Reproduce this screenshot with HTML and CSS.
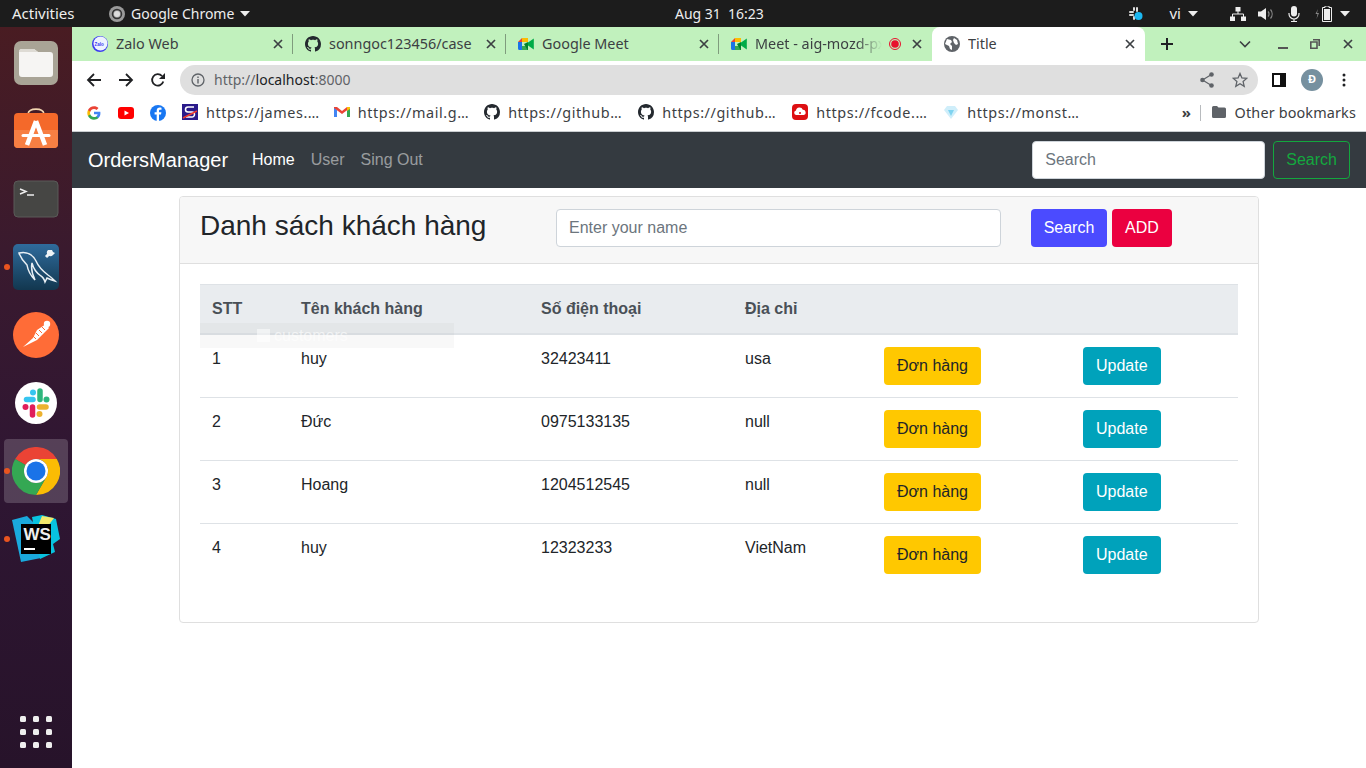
FILE: index.html
```html
<!DOCTYPE html>
<html lang="en">
<head>
    <meta charset="UTF-8">
    <title>Title</title>
    <link rel="stylesheet" href="styles.css">
</head>
<body>
    <!-- Shared icons -->
    <svg class="icon-defs" width="0" height="0">
        <symbol id="github" viewBox="0 0 16 16">
            <path fill="#24292f" d="M8 0C3.58 0 0 3.58 0 8c0 3.54 2.29 6.53 5.47 7.59.4.07.55-.17.55-.38 0-.19-.01-.82-.01-1.49-2.01.37-2.53-.49-2.69-.94-.09-.23-.48-.94-.82-1.13-.28-.15-.68-.52-.01-.53.63-.01 1.08.58 1.23.82.72 1.21 1.87.87 2.33.66.07-.52.28-.87.51-1.07-1.78-.2-3.64-.89-3.64-3.95 0-.87.31-1.59.82-2.15-.08-.2-.36-1.02.08-2.12 0 0 .67-.21 2.2.82.64-.18 1.32-.27 2-.27.68 0 1.36.09 2 .27 1.53-1.04 2.2-.82 2.2-.82.44 1.1.16 1.92.08 2.12.51.56.82 1.27.82 2.15 0 3.07-1.87 3.75-3.65 3.95.29.25.54.73.54 1.48 0 1.07-.01 1.93-.01 2.2 0 .21.15.46.55.38A8.013 8.013 0 0016 8c0-4.42-3.58-8-8-8z"/>
        </symbol>
        <symbol id="meet" viewBox="0 0 16 16">
            <path fill="#fbbc04" d="M4 2h6v4H4z"/>
            <path fill="#ea4335" d="M4 2v4H0z"/>
            <path fill="#1a73e8" d="M0 6h4v8H1.5A1.5 1.5 0 0 1 0 12.5z"/>
            <path fill="#34a853" d="M4 10h6v4H4z"/>
            <path fill="#00832d" d="M10 6v8h-.5L6 8z"/>
            <path fill="#00ac47" d="M10 6.5 15.8 2.5V13.5L10 9.5z"/>
        </symbol>
        <symbol id="close" viewBox="0 0 10 10">
            <path d="M1 1l8 8M9 1l-8 8" stroke="#3c4043" stroke-width="1.7" fill="none"/>
        </symbol>
        <symbol id="caret" viewBox="0 0 10 6">
            <path d="M0 0h10L5 5.5z" fill="#eee"/>
        </symbol>
    </svg>

    <!-- GNOME top bar -->
    <div class="top-bar">
        <div class="top-left">
            <span class="activities">Activities</span>
            <span class="app-menu">
                <svg width="16" height="16" viewBox="0 0 16 16"><circle cx="8" cy="8" r="8" fill="#9a9a9a"/><circle cx="8" cy="8" r="4.5" fill="none" stroke="#333" stroke-width="1.5"/><circle cx="8" cy="8" r="3" fill="#ddd"/></svg>
                <span>Google Chrome</span>
                <svg class="caret" width="10" height="6"><use href="#caret"/></svg>
            </span>
        </div>
        <div class="clock"><span>Aug 31</span><span>16:23</span></div>
        <div class="tray">
            <svg class="tray-slack" width="16" height="16" viewBox="0 0 16 16"><g fill="#ddd"><rect x="1" y="5" width="5" height="2" rx="1"/><rect x="5" y="1" width="2" height="4" rx="1"/><rect x="8" y="1" width="2" height="5" rx="1"/><rect x="1" y="8" width="5" height="2" rx="1"/><rect x="5" y="10" width="2" height="4" rx="1"/></g><circle cx="10.5" cy="10" r="4" fill="#1cb8f2"/></svg>
            <span class="tray-lang">vi</span>
            <svg class="caret tray-lang-caret" width="10" height="6"><use href="#caret"/></svg>
            <svg class="tray-network" width="16" height="14" viewBox="0 0 16 14"><g fill="#eee"><rect x="5.5" y="0" width="5" height="4.5"/><rect x="0" y="9.5" width="5" height="4.5"/><rect x="11" y="9.5" width="5" height="4.5"/></g><path d="M8 4v3M2.5 10V7h11v3" stroke="#eee" fill="none"/></svg>
            <svg class="tray-volume" width="16" height="14" viewBox="0 0 16 14"><path d="M0 4.5h3L8 1v12L3 9.5H0z" fill="#eee"/><path d="M10 4.5a3.5 3.5 0 0 1 0 5M12.5 2.5a7 7 0 0 1 0 9" stroke="#888" fill="none" stroke-width="1.2"/></svg>
            <svg class="tray-mic" width="12" height="16" viewBox="0 0 12 16"><rect x="3" y="0" width="6" height="10.5" rx="3" fill="#eee"/><path d="M1 7v1a5 5 0 0 0 10 0V7M6 13v2.5M3 15.5h6" stroke="#eee" fill="none" stroke-width="1.2"/></svg>
            <svg class="tray-battery" width="18" height="16" viewBox="0 0 18 16"><path d="M3 3 .5 8H2.5L1.5 13 4 7H2z" fill="#888"/><path d="M10 0h4v1.5h2.5V15.5H7.5V1.5H10z" fill="none" stroke="#eee"/><rect x="9" y="3" width="6" height="11" fill="#eee"/></svg>
            <svg class="caret" width="10" height="6"><use href="#caret"/></svg>
        </div>
    </div>

    <div class="desktop">
        <!-- Ubuntu dock -->
        <aside class="dock">
            <div class="dock-item">
                <svg width="46" height="46" viewBox="0 0 46 46"><rect x="1" y="1" width="44" height="44" rx="7" fill="#a9a496"/><path d="M6 12a3 3 0 0 1 3-3h12l4 3h12a3 3 0 0 1 3 3v19a3 3 0 0 1-3 3H9a3 3 0 0 1-3-3z" fill="#f6f5f3"/><path d="M6 12a3 3 0 0 1 3-3h12l4 3z" fill="#dedbd4"/></svg>
            </div>
            <div class="dock-item">
                <svg width="46" height="46" viewBox="0 0 46 46"><path d="M15 6c1-6.5 15-6.5 16 0" fill="none" stroke="#f2d6b0" stroke-width="1.6"/><rect x="1" y="5" width="44" height="35" rx="4" fill="#f4692a"/><path d="M1 22h44v14a4 4 0 0 1-4 4H5a4 4 0 0 1-4-4z" fill="#f77f43"/><path d="M23 13 14 37M23 13l9 24" stroke="#fff" stroke-width="4.5" fill="none"/><path d="M10 27.5h26" stroke="#fff" stroke-width="3" stroke-linecap="round"/></svg>
            </div>
            <div class="dock-item">
                <svg width="46" height="38" viewBox="0 0 46 38"><rect x="1" y="1" width="44" height="36" rx="4" fill="#464644" stroke="#5a5a58"/><path d="M7 9l6 2.5L7 14" fill="none" stroke="#eee" stroke-width="1.5"/><path d="M14 15h7" stroke="#eee" stroke-width="1.5"/></svg>
            </div>
            <div class="dock-item running">
                <svg width="46" height="46" viewBox="0 0 46 46">
                    <defs><linearGradient id="mysql-bg" x1="0" y1="0" x2="0" y2="1"><stop offset="0" stop-color="#2f6b9c"/><stop offset="1" stop-color="#12374f"/></linearGradient></defs>
                    <rect width="46" height="46" rx="5" fill="url(#mysql-bg)"/>
                    <path d="M6 9c8-2 14 2 17 8 3 7 8 11 12 14 3 2 5 4 7 6-4-1-6-2-8-3l-2 4c-1-3-2-5-4-6-6-4-8-9-9-13-1 5 0 11 3 17-4-4-7-9-8-15-3-3-6-6-8-12z" fill="none" stroke="#e8eff4" stroke-width="1.5"/>
                    <path d="M33 13l5-5" stroke="#eef3f6" stroke-width="3"/><path d="M35 6a3.5 3.5 0 0 0 5 5l2-2-2-1-1-2z" fill="#eef3f6"/>
                </svg>
            </div>
            <div class="dock-item">
                <svg width="46" height="46" viewBox="0 0 46 46"><circle cx="23" cy="23" r="23" fill="#ff6c37"/><path d="M10 35l4-2 10-5 12-12-3-4-9 6-4 8z" fill="#fff"/><path d="M20 24l3 3M23 21l3 3M26 18l3 3M29 15l3 3" stroke="#ff6c37"/><circle cx="34" cy="12" r="3.2" fill="#fff"/></svg>
            </div>
            <div class="dock-item">
                <svg width="46" height="46" viewBox="0 0 46 46"><circle cx="23" cy="23" r="21" fill="#fff"/>
                    <g fill="none" stroke-width="5.5" stroke-linecap="round"><path d="M13.5 19.5H20" stroke="#36c5f0"/><path d="M27 11v8.5" stroke="#2eb67d"/><path d="M26.5 27H33" stroke="#ecb22e"/><path d="M19.5 27v8" stroke="#e01e5a"/></g>
                    <circle cx="20" cy="12.5" r="3" fill="#36c5f0"/><circle cx="33.5" cy="19.5" r="3" fill="#2eb67d"/><circle cx="26.5" cy="34" r="3" fill="#ecb22e"/><circle cx="12.5" cy="27" r="3" fill="#e01e5a"/>
                </svg>
            </div>
            <div class="dock-item running active">
                <svg width="48" height="48" viewBox="0 0 48 48">
                    <path fill="#ea4335" d="M3.2 12A24 24 0 0 1 44.8 12H24A12 12 0 0 0 13.6 18Z"/>
                    <path fill="#fbbc04" d="M44.8 12A24 24 0 0 1 24 48L34.4 30A12 12 0 0 0 24 12Z"/>
                    <path fill="#34a853" d="M3.2 12A24 24 0 0 0 24 48L34.4 30A12 12 0 0 1 13.6 18Z"/>
                    <circle cx="24" cy="24" r="12" fill="#fff"/><circle cx="24" cy="24" r="9.5" fill="#1a73e8"/>
                </svg>
            </div>
            <div class="dock-item running">
                <svg width="48" height="48" viewBox="0 0 48 48">
                    <path fill="#1aa9dd" d="M0 5l15-4 8 8 6 34-20 4-3-14z"/>
                    <path fill="#08c4e0" d="M20 2l10-2 14 4 4 20-7 5 2 8-15 7z"/>
                    <path fill="#f3e96b" d="M30 1l12 2-6 8h-10z"/>
                    <rect x="9" y="9" width="30" height="30" fill="#000"/>
                    <text class="ws-text" x="11.5" y="25">WS</text>
                    <rect x="12" y="33" width="11" height="2" fill="#fff"/>
                </svg>
            </div>
            <div class="dock-spacer"></div>
            <div class="dock-item">
                <svg width="32" height="32" viewBox="0 0 32 32"><g fill="#eee"><rect x="0" y="0" width="6" height="6" rx="1.5"/><rect x="13" y="0" width="6" height="6" rx="1.5"/><rect x="26" y="0" width="6" height="6" rx="1.5"/><rect x="0" y="13" width="6" height="6" rx="1.5"/><rect x="13" y="13" width="6" height="6" rx="1.5"/><rect x="26" y="13" width="6" height="6" rx="1.5"/><rect x="0" y="26" width="6" height="6" rx="1.5"/><rect x="13" y="26" width="6" height="6" rx="1.5"/><rect x="26" y="26" width="6" height="6" rx="1.5"/></g></svg>
            </div>
        </aside>

        <div class="browser">
            <!-- Chrome tabs -->
            <div class="tab-strip">
                <div class="tab">
                    <svg width="16" height="16" viewBox="0 0 16 16"><circle cx="8" cy="8" r="8" fill="#3b3bf0"/><circle cx="8.5" cy="7.5" r="7" fill="#eef2ff"/><text class="zalo-text" x="2.5" y="9.5">Zalo</text></svg>
                    <span class="tab-title">Zalo Web</span>
                    <svg class="tab-close" width="10" height="10"><use href="#close"/></svg>
                </div>
                <div class="tab">
                    <svg width="16" height="16"><use href="#github"/></svg>
                    <span class="tab-title">sonngoc123456/case</span>
                    <svg class="tab-close" width="10" height="10"><use href="#close"/></svg>
                </div>
                <div class="tab">
                    <svg width="16" height="16"><use href="#meet"/></svg>
                    <span class="tab-title">Google Meet</span>
                    <svg class="tab-close" width="10" height="10"><use href="#close"/></svg>
                </div>
                <div class="tab tab-last">
                    <svg width="16" height="16"><use href="#meet"/></svg>
                    <span class="tab-title tab-fade">Meet - aig-mozd-px</span>
                    <svg class="tab-rec" width="12" height="12" viewBox="0 0 12 12"><circle cx="6" cy="6" r="5.5" fill="none" stroke="#e8112d"/><circle cx="6" cy="6" r="3.8" fill="#e8112d"/></svg>
                    <svg class="tab-close" width="10" height="10"><use href="#close"/></svg>
                </div>
                <div class="tab tab-active">
                    <svg width="16" height="16" viewBox="0 0 16 16"><circle cx="8" cy="8" r="8" fill="#5f6368"/><path d="M3 3l4 1 1 2-2 2 2 2v4l-2-1-1-3-4-2zM10 2l3 2 1 4-2 1-2-2-1-3z" fill="#fff"/></svg>
                    <span class="tab-title">Title</span>
                    <svg class="tab-close" width="10" height="10"><use href="#close"/></svg>
                </div>
                <div class="strip-actions">
                    <svg class="strip-new" width="14" height="14" viewBox="0 0 14 14"><path d="M7 1v12M1 7h12" stroke="#202124" stroke-width="2"/></svg>
                    <svg class="strip-list" width="12" height="8" viewBox="0 0 12 8"><path d="M1 1.5l5 5 5-5" fill="none" stroke="#3c4043" stroke-width="1.6"/></svg>
                    <svg class="strip-min" width="10" height="10" viewBox="0 0 10 10"><path d="M0 9h10" stroke="#555" stroke-width="2"/></svg>
                    <svg class="strip-restore" width="10" height="10" viewBox="0 0 10 10"><path d="M3 .8h6.2V7M.8 3H7v6.2H.8z" fill="none" stroke="#555" stroke-width="1.6"/></svg>
                    <svg class="strip-close" width="10" height="10"><use href="#close"/></svg>
                </div>
            </div>

            <!-- Chrome toolbar -->
            <div class="toolbar">
                <svg class="tool-back" width="16" height="16" viewBox="0 0 16 16"><path d="M15 8H2M8 2 2 8l6 6" fill="none" stroke="#202124" stroke-width="1.8"/></svg>
                <svg class="tool-forward" width="16" height="16" viewBox="0 0 16 16"><path d="M1 8h13M8 2l6 6-6 6" fill="none" stroke="#202124" stroke-width="1.8"/></svg>
                <svg class="tool-reload" width="16" height="16" viewBox="0 0 16 16"><path d="M13.3 9.5A5.7 5.7 0 1 1 12 4" fill="none" stroke="#202124" stroke-width="1.8"/><path d="M15 1v6H9z" fill="#202124"/></svg>
                <div class="omnibox">
                    <svg width="14" height="14" viewBox="0 0 14 14"><circle cx="7" cy="7" r="6" fill="none" stroke="#5f6368" stroke-width="1.3"/><path d="M7 6v4.5M7 3.5V5" stroke="#5f6368" stroke-width="1.4"/></svg>
                    <span class="url"><span class="url-dim">http://</span>localhost<span class="url-dim">:8000</span></span>
                    <svg class="omni-share" width="14" height="16" viewBox="0 0 14 16"><circle cx="11.5" cy="2.5" r="2.3" fill="#5f6368"/><circle cx="2.5" cy="8" r="2.3" fill="#5f6368"/><circle cx="11.5" cy="13.5" r="2.3" fill="#5f6368"/><path d="M11.5 2.5 2.5 8l9 5.5" fill="none" stroke="#5f6368" stroke-width="1.2"/></svg>
                    <svg class="omni-star" width="16" height="16" viewBox="0 0 16 16"><path d="M8 1.5l1.9 4.5 4.8.4-3.6 3.2 1.1 4.7L8 11.8l-4.200 2.500 1.100-4.700L1.300 6.400l4.800-.4z" fill="none" stroke="#5f6368" stroke-width="1.3"/></svg>
                </div>
                <svg class="tool-panel" width="14" height="14" viewBox="0 0 14 14"><rect x="1" y="1" width="12" height="12" fill="none" stroke="#111" stroke-width="2"/><rect x="8" y="1" width="5" height="12" fill="#111"/></svg>
                <span class="avatar">Đ</span>
                <svg class="tool-menu" width="4" height="14" viewBox="0 0 4 14"><circle cx="2" cy="2" r="1.5" fill="#202124"/><circle cx="2" cy="7" r="1.5" fill="#202124"/><circle cx="2" cy="12" r="1.5" fill="#202124"/></svg>
            </div>

            <!-- Bookmarks bar -->
            <div class="bookmarks">
                <span class="bm-icon">
                    <svg width="14" height="14" viewBox="0 0 48 48"><path fill="#4285f4" d="M46 24.5c0-1.6-.1-3.1-.4-4.500H24v8.500h12.400c-.5 2.900-2.200 5.300-4.600 6.900v5.800h7.500C43.500 36.900 46 31.200 46 24.500z"/><path fill="#34a853" d="M24 47c6.200 0 11.400-2 15.300-5.600l-7.500-5.800c-2.100 1.400-4.700 2.200-7.800 2.200-6 0-11.100-4-12.900-9.500H3.400v6C7.200 41.800 15 47 24 47z"/><path fill="#fbbc04" d="M11.100 28.300c-.5-1.400-.7-2.800-.7-4.300s.3-3 .7-4.300v-6H3.400C1.900 16.700 1 20.200 1 24s.9 7.300 2.400 10.300z"/><path fill="#ea4335" d="M24 10.200c3.400 0 6.400 1.200 8.800 3.400l6.600-6.600C35.400 3.300 30.200 1 24 1 15 1 7.200 6.200 3.400 13.700l7.700 6C12.900 14.200 18 10.200 24 10.200z"/></svg>
                </span>
                <span class="bm-icon">
                    <svg width="16" height="12" viewBox="0 0 16 12"><rect width="16" height="12" rx="3" fill="#f00"/><path d="M6.5 3.5v5L11 6z" fill="#fff"/></svg>
                </span>
                <span class="bm-icon">
                    <svg width="16" height="16" viewBox="0 0 16 16"><circle cx="8" cy="8" r="8" fill="#1877f2"/><path d="M9 16V9.5h2l.4-2.3H9V6c0-.7.3-1.200 1.300-1.200h1.200V2.700C11 2.600 10.400 2.500 9.800 2.500 7.900 2.500 6.700 3.700 6.700 5.700v1.500H4.600v2.300h2.100V16z" fill="#fff"/></svg>
                </span>
                <span class="bm-item bm-james">
                    <svg width="16" height="16" viewBox="0 0 16 16"><rect width="16" height="16" fill="#2a1a8a"/><path d="M12 3H6a2 2 0 0 0 0 5h4a2 2 0 0 1 0 5H4" fill="none" stroke="#fff" stroke-width="1.5"/><path d="M1 14 15 7" stroke="#f03a2e" stroke-width="1.6"/></svg>
                    <span>https://james.…</span>
                </span>
                <span class="bm-item bm-mail">
                    <svg width="16" height="12" viewBox="0 0 16 12"><path d="M0 1v10h3V4z" fill="#4285f4"/><path d="M16 1v10h-3V4z" fill="#34a853"/><path d="M0 1h3l5 4 5-4h3v1L8 8 0 2z" fill="#ea4335"/><path d="M13 1h3v2l-3 2z" fill="#fbbc04"/></svg>
                    <span>https://mail.g…</span>
                </span>
                <span class="bm-item">
                    <svg width="16" height="16"><use href="#github"/></svg>
                    <span>https://github…</span>
                </span>
                <span class="bm-item">
                    <svg width="16" height="16"><use href="#github"/></svg>
                    <span>https://github…</span>
                </span>
                <span class="bm-item">
                    <svg width="16" height="16" viewBox="0 0 16 16"><rect width="16" height="16" rx="4" fill="#dd0f12"/><path d="M4 11a2.3 2.3 0 0 1 0-4.5 3.5 3.5 0 0 1 6.8-.7A2.7 2.7 0 0 1 12 11z" fill="#fff"/><circle cx="8" cy="9" r="1" fill="#dd0f12"/></svg>
                    <span>https://fcode.…</span>
                </span>
                <span class="bm-item">
                    <svg width="16" height="16" viewBox="0 0 16 16"><path d="M4 2h8l3 4-7 9-7-9z" fill="#cfeefa"/><path d="M5 6h6L8 12z" fill="#7fd3f0"/></svg>
                    <span>https://monst…</span>
                </span>
                <span class="bm-more">»</span>
                <span class="bm-divider"></span>
                <span class="bm-other">
                    <svg width="14" height="12" viewBox="0 0 14 12"><path d="M0 1.5A1.5 1.5 0 0 1 1.5 0H5l1.5 1.5h6A1.5 1.5 0 0 1 14 3v7.5a1.5 1.5 0 0 1-1.5 1.5h-11A1.5 1.5 0 0 1 0 10.5z" fill="#5f6368"/></svg>
                    <span>Other bookmarks</span>
                </span>
            </div>

            <!-- The page itself -->
            <div class="page">
                <nav class="navbar">
                    <a class="navbar-brand">OrdersManager</a>
                    <a class="nav-link nav-current">Home</a>
                    <a class="nav-link">User</a>
                    <a class="nav-link">Sing Out</a>
                    <form class="nav-search">
                        <input class="form-control nav-input" placeholder="Search">
                        <button type="button" class="btn btn-outline-green">Search</button>
                    </form>
                </nav>

                <div class="card">
                    <div class="card-header">
                        <h3 class="card-title">Danh sách khách hàng</h3>
                        <input class="form-control header-input" placeholder="Enter your name">
                        <button type="button" class="btn btn-blue">Search</button>
                        <button type="button" class="btn btn-red">ADD</button>
                    </div>
                    <div class="card-body">
                        <table class="customer-table">
                            <colgroup>
                                <col class="col-stt"><col class="col-name"><col class="col-phone"><col class="col-address"><col class="col-order"><col class="col-update">
                            </colgroup>
                            <thead>
                                <tr><th>STT</th><th>Tên khách hàng</th><th>Số điện thoại</th><th>Địa chỉ</th><th></th><th></th></tr>
                            </thead>
                            <tbody>
                                <tr>
                                    <td>1</td><td>huy</td><td>32423411</td><td>usa</td>
                                    <td><button type="button" class="btn btn-yellow">Đơn hàng</button></td>
                                    <td><button type="button" class="btn btn-teal">Update</button></td>
                                </tr>
                                <tr>
                                    <td>2</td><td>Đức</td><td>0975133135</td><td>null</td>
                                    <td><button type="button" class="btn btn-yellow">Đơn hàng</button></td>
                                    <td><button type="button" class="btn btn-teal">Update</button></td>
                                </tr>
                                <tr>
                                    <td>3</td><td>Hoang</td><td>1204512545</td><td>null</td>
                                    <td><button type="button" class="btn btn-yellow">Đơn hàng</button></td>
                                    <td><button type="button" class="btn btn-teal">Update</button></td>
                                </tr>
                                <tr>
                                    <td>4</td><td>huy</td><td>12323233</td><td>VietNam</td>
                                    <td><button type="button" class="btn btn-yellow">Đơn hàng</button></td>
                                    <td><button type="button" class="btn btn-teal">Update</button></td>
                                </tr>
                            </tbody>
                        </table>
                        <!-- Drag ghost left over the table -->
                        <div class="drag-ghost">
                            <svg width="13" height="13" viewBox="0 0 13 13"><rect width="13" height="13" fill="#fff" opacity="0.5"/></svg>
                            <span>customers</span>
                        </div>
                    </div>
                </div>
            </div>
        </div>
    </div>
</body>
</html>
```

FILE: styles.css
```css
/* General Reset */
* {
    margin: 0;
    padding: 0;
    box-sizing: border-box;
}

html, body {
    height: 100%;
    overflow: hidden;
}

body {
    display: flex;
    flex-direction: column;
    font-family: "Liberation Sans", Arial, sans-serif;
    font-size: 16px;
    line-height: 1.5;
    color: #212529;
    background: #fff;
}

svg {
    flex: none;
    display: block;
}

.icon-defs {
    position: absolute;
}

/* GNOME top bar */
.top-bar {
    flex: none;
    height: 27px;
    display: grid;
    grid-template-columns: 675px auto 1fr;
    align-items: center;
    background: #1c1c1c;
    color: #eee;
    font-family: "Noto Sans", sans-serif;
    font-size: 14px;
}

.top-left {
    display: flex;
    align-items: center;
    padding-left: 12px;
}

.activities {
    width: 97px;
    font-size: 15px;
}

.app-menu {
    display: flex;
    align-items: center;
    gap: 6px;
}

.clock {
    display: flex;
    gap: 7px;
}

.tray {
    display: flex;
    align-items: center;
    justify-content: flex-end;
    padding-right: 16px;
}

.tray-lang {
    margin-left: 26px;
    font-size: 15px;
}

.tray-lang-caret {
    margin-left: 7px;
    margin-right: 32px;
}

.tray-volume {
    margin-left: 12px;
}

.tray-mic {
    margin-left: 14px;
}

.tray-battery {
    margin-left: 15px;
    margin-right: 7px;
}

/* Main area under the top bar */
.desktop {
    flex: 1;
    display: flex;
    min-height: 0;
}

/* Dock */
.dock {
    flex: none;
    width: 72px;
    display: flex;
    flex-direction: column;
    padding: 2px 0;
    background: linear-gradient(180deg, #491c22 0%, #3a1a2e 30%, #2f1633 60%, #27132a 100%);
}

.dock-item {
    position: relative;
    flex: none;
    height: 68px;
    display: flex;
    align-items: center;
    justify-content: center;
}

.dock-spacer {
    flex: 1;
}

.dock-item.active::before {
    content: "";
    position: absolute;
    left: 4px;
    right: 4px;
    top: 2px;
    bottom: 2px;
    border-radius: 4px;
    background: rgba(255, 255, 255, 0.18);
}

.dock-item.active svg {
    position: relative;
}

.dock-item.running::after {
    content: "";
    position: absolute;
    left: 4px;
    top: 31px;
    width: 6px;
    height: 6px;
    border-radius: 50%;
    background: #e95420;
}

.ws-text {
    font-family: "Liberation Sans", Arial, sans-serif;
    font-size: 17px;
    font-weight: bold;
    fill: #eee;
}

/* Browser */
.browser {
    flex: 1;
    min-width: 0;
    display: flex;
    flex-direction: column;
}

.tab-strip {
    flex: none;
    height: 34px;
    display: flex;
    padding-left: 8px;
    background: #c1f1bd;
    font-family: "Noto Sans", sans-serif;
    font-size: 14.4px;
    color: #3c4043;
}

.tab {
    position: relative;
    flex: none;
    width: 213px;
    display: flex;
    align-items: center;
    padding: 0 10px 1px 12px;
}

.tab::after {
    content: "";
    position: absolute;
    right: 0;
    top: 7px;
    bottom: 7px;
    width: 1px;
    background: #7f9c7d;
}

.tab-last::after,
.tab-active::after {
    display: none;
}

.tab-title {
    flex: 1;
    min-width: 0;
    margin-left: 8px;
    white-space: nowrap;
    overflow: hidden;
}

.tab-fade {
    -webkit-mask-image: linear-gradient(90deg, #000 80%, transparent 100%);
    mask-image: linear-gradient(90deg, #000 80%, transparent 100%);
}

.tab-rec {
    margin: 0 11px 0 7px;
}

.tab-active {
    background: #fff;
    border-radius: 8px 8px 0 0;
}

.strip-actions {
    flex: 1;
    display: flex;
    align-items: center;
    padding: 0 0 1px 15px;
}

.strip-list {
    margin-left: 65px;
}

.strip-min {
    margin-left: 27px;
}

.strip-restore {
    margin-left: 22px;
}

.strip-close {
    margin-left: 23px;
}

.toolbar {
    flex: none;
    height: 37px;
    display: flex;
    align-items: center;
    padding-left: 14px;
    background: #fff;
}

.tool-forward,
.tool-reload {
    margin-left: 16px;
}

.omnibox {
    flex: none;
    width: 1078px;
    height: 30px;
    margin-left: 14px;
    display: flex;
    align-items: center;
    padding: 0 10px 0 11px;
    border-radius: 15px;
    background: #dfdfdf;
    font-family: "Noto Sans", sans-serif;
    font-size: 14px;
    color: #202124;
}

.url {
    flex: 1;
    margin-left: 9px;
}

.url-dim {
    color: #5f6368;
}

.omni-star {
    margin-left: 18px;
}

.tool-panel {
    margin-left: 14px;
}

.avatar {
    flex: none;
    width: 22px;
    height: 22px;
    margin-left: 15px;
    display: flex;
    align-items: center;
    justify-content: center;
    border-radius: 50%;
    background: #76909f;
    color: #fff;
    font-family: "Noto Sans", sans-serif;
    font-size: 11px;
    font-weight: bold;
}

.tool-menu {
    margin-left: 19px;
}

.bookmarks {
    flex: none;
    height: 34px;
    display: flex;
    align-items: center;
    padding: 0 10px 4px 6px;
    border-bottom: 1px solid #c9cdd0;
    background: #fff;
    font-family: "Noto Sans", sans-serif;
    font-size: 14.4px;
    letter-spacing: 0.58px;
    color: #3c4043;
    white-space: nowrap;
}

.bm-icon {
    flex: none;
    width: 32px;
    display: flex;
    justify-content: center;
}

.bm-item {
    flex: none;
    display: flex;
    align-items: center;
    gap: 8px;
    margin: 0 8px;
}

.bm-james {
    margin-right: 6px;
}

.bm-mail {
    margin-right: 7px;
}

.bm-more {
    margin-left: auto;
    font-size: 15px;
    font-weight: bold;
}

.bm-divider {
    width: 1px;
    height: 16px;
    margin-left: 8px;
    background: #b8bbbe;
}

.bm-other {
    display: flex;
    align-items: center;
    gap: 9px;
    margin-left: 11px;
    letter-spacing: 0.15px;
}

/* Page */
.page {
    flex: 1;
    min-height: 0;
    background: #fff;
}

.navbar {
    height: 56px;
    display: flex;
    align-items: center;
    padding: 8px 16px;
    background: #343a40;
}

.navbar-brand {
    margin-right: 16px;
    font-size: 20px;
    color: #fff;
}

.nav-link {
    padding: 8px;
    color: rgba(255, 255, 255, 0.5);
}

.nav-current {
    color: #fff;
}

.nav-search {
    display: flex;
    gap: 8px;
    margin-left: auto;
}

.form-control {
    height: 38px;
    padding: 6px 12px;
    border: 1px solid #ced4da;
    border-radius: 4px;
    font: inherit;
    color: #495057;
    background: #fff;
}

.form-control::placeholder {
    color: #6c757d;
}

.nav-input {
    width: 233px;
}

.btn {
    display: inline-block;
    height: 38px;
    padding: 6px 12px;
    border: 1px solid transparent;
    border-radius: 4px;
    font: inherit;
    white-space: nowrap;
    cursor: pointer;
}

.btn-outline-green {
    border-color: #13a83e;
    color: #13a83e;
    background: transparent;
}

.btn-blue {
    width: 76px;
    padding: 6px 0;
    background: #4b4bff;
    color: #fff;
}

.btn-red {
    width: 60px;
    margin-left: 5px;
    padding: 6px 0;
    background: #eb0040;
    color: #fff;
}

.btn-yellow {
    background: #ffc800;
    color: #212529;
}

.btn-teal {
    background: #00a2bb;
    color: #fff;
}

/* Card */
.card {
    width: 1080px;
    margin: 8px auto 0;
    border: 1px solid #dfdfdf;
    border-radius: 4px;
}

.card-header {
    height: 67px;
    display: flex;
    align-items: flex-start;
    padding: 12px 20px;
    border-bottom: 1px solid #dfdfdf;
    border-radius: 3px 3px 0 0;
    background: #f7f7f7;
}

.card-title {
    width: 356px;
    font-size: 28px;
    font-weight: 500;
    line-height: 33.6px;
}

.header-input {
    width: 445px;
    margin-right: 30px;
}

.card-body {
    position: relative;
    padding: 20px 20px 36px;
}

.customer-table {
    width: 1038px;
    table-layout: fixed;
    border-collapse: collapse;
}

.col-stt { width: 89px; }
.col-name { width: 240px; }
.col-phone { width: 204px; }
.col-address { width: 139px; }
.col-order { width: 199px; }
.col-update { width: 167px; }

.customer-table th {
    height: 49px;
    padding: 12px 12px 11px;
    border-top: 1px solid #dee2e6;
    border-bottom: 2px solid #dee2e6;
    background: #e9ecef;
    color: #495057;
    font-weight: bold;
    text-align: left;
}

.customer-table td {
    padding: 12px;
    border-top: 1px solid #dee2e6;
    vertical-align: top;
}

.customer-table tbody tr:first-child td {
    height: 63px;
    border-top: 0;
}

/* Drag ghost */
.drag-ghost {
    position: absolute;
    left: 20px;
    top: 59px;
    width: 254px;
    height: 25px;
    display: flex;
    align-items: center;
    gap: 4px;
    padding-left: 57px;
    background: rgba(120, 120, 120, 0.05);
    color: rgba(255, 255, 255, 0.6);
}

.zalo-text {
    font-family: "Liberation Sans", Arial, sans-serif;
    font-size: 4.5px;
    font-weight: bold;
    fill: #3b3bf0;
}
```
